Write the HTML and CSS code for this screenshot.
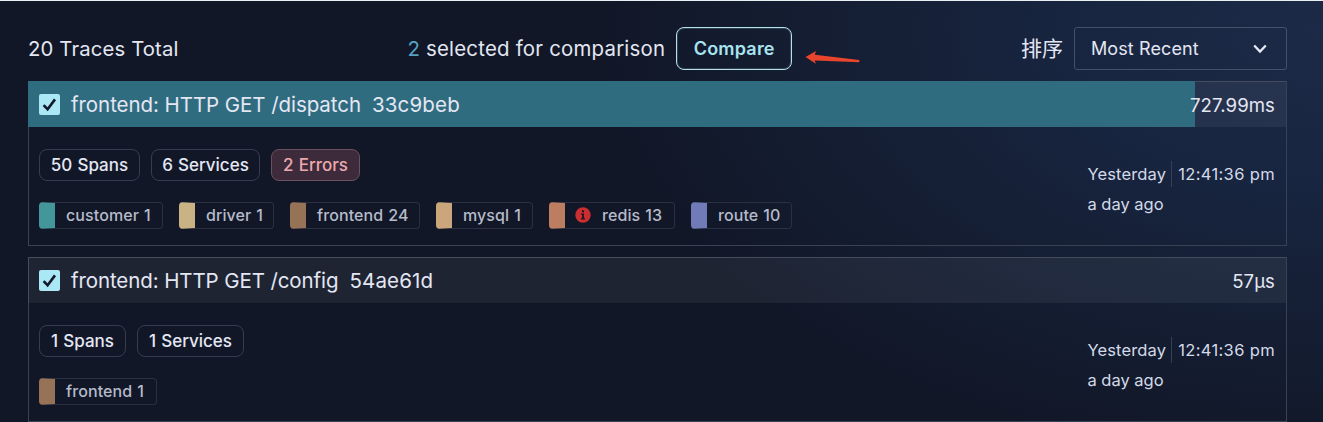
FILE: index.html
```html
<!DOCTYPE html>
<html lang="zh">
<head>
<meta charset="utf-8">
<title>Traces</title>
<link rel="stylesheet" href="styles.css">
</head>
<body>
<main class="page">
  <header class="toolbar">
    <div class="total">20 Traces Total</div>
    <div class="selection">
      <span><span class="count">2</span> selected for comparison</span>
      <button class="compare">Compare</button>
      <svg class="arrow" width="56" height="16" viewBox="0 0 56 16"><path d="M0.5 7 11 1 9.8 4.8 54.5 10 54.2 12.2 9.8 10.4 10.8 13.8Z" fill="#e8452c"/></svg>
    </div>
    <div class="sort">
      <span class="sort-label">排序</span>
      <div class="select"><span>Most Recent</span>
        <svg width="14" height="10" viewBox="0 0 14 10"><path d="M1.2 1.5 7 7.5 12.8 1.5" fill="none" stroke="#e6eaf5" stroke-width="2.3"/></svg>
      </div>
    </div>
  </header>

  <section class="card">
    <div class="card-head">
      <div class="bar" style="width:1167px"></div>
      <span class="check"><svg width="21" height="21" viewBox="0 0 21 21"><path d="M4.6 11.2 8.6 15.2 16 5.4" fill="none" stroke="#14192c" stroke-width="2.6"/></svg></span>
      <span class="name">frontend: HTTP GET /dispatch</span><span class="trace-id">33c9beb</span>
      <span class="duration">727.99ms</span>
    </div>
    <div class="card-body">
      <div class="details">
        <div class="pills">
          <span class="pill w-50">50 Spans</span><span class="pill w-6s">6 Services</span><span class="pill error">2 Errors</span>
        </div>
        <div class="tags">
          <span class="tag teal w-cust">customer 1</span>
          <span class="tag sand w-driv">driver 1</span>
          <span class="tag brown w-f24">frontend 24</span>
          <span class="tag tan w-mysq">mysql 1</span>
          <span class="tag clay w-redi"><svg width="16" height="16" viewBox="0 0 16 16"><circle cx="8" cy="8" r="7.7" fill="#c92f30"/><path d="M7 3.2h2v2H7zM6.2 6.6h2.7v4.3h1v1.6H6.1v-1.6h1V8.1h-.9z" fill="#241322"/></svg>redis 13</span>
          <span class="tag blue w-rout">route 10</span>
        </div>
      </div>
      <div class="when">
        <div class="stamp"><span class="day">Yesterday</span><span class="time">12:41:36 pm</span></div>
        <div class="ago">a day ago</div>
      </div>
    </div>
  </section>

  <section class="card">
    <div class="card-head">
      <span class="check"><svg width="21" height="21" viewBox="0 0 21 21"><path d="M4.6 11.2 8.6 15.2 16 5.4" fill="none" stroke="#14192c" stroke-width="2.6"/></svg></span>
      <span class="name config">frontend: HTTP GET /config</span><span class="trace-id">54ae61d</span>
      <span class="duration">57μs</span>
    </div>
    <div class="card-body">
      <div class="details">
        <div class="pills">
          <span class="pill w-1p">1 Spans</span><span class="pill w-1s">1 Services</span>
        </div>
        <div class="tags">
          <span class="tag brown w-f1">frontend 1</span>
        </div>
      </div>
      <div class="when">
        <div class="stamp"><span class="day">Yesterday</span><span class="time">12:41:36 pm</span></div>
        <div class="ago">a day ago</div>
      </div>
    </div>
  </section>
</main>
</body>
</html>
```
FILE: styles.css
```css
* { box-sizing: border-box; }
body {
  margin: 0;
  font-family: Inter, "Noto Sans CJK SC", sans-serif;
  color: #e4e7f3;
  background: #111526;
}
.page {
  height: 422px;
  overflow: hidden;
  padding: 26px 36px 0 28px;
  border-top: 1px solid #e9f0f4;
  background: radial-gradient(ellipse 720px 430px at 1323px 30px, #1c2a47 0%, #182540 35%, #111727 100%);
  white-space: nowrap;
}
.toolbar {
  display: flex;
  justify-content: space-between;
  align-items: center;
  height: 43px;
  margin-bottom: 11px;
}
.total { font-size: 20.3px; letter-spacing: 0.15px; }
.selection { position: relative; display: flex; align-items: center; gap: 11px; font-size: 20.4px; letter-spacing: 0.22px; }
.count { color: #55a3c4; }
.compare {
  width: 116px;
  height: 43px;
  padding: 0;
  border: 1px solid #b4dfeb;
  box-shadow: inset 0 0 0 1px rgba(169, 219, 232, 0.2);
  border-radius: 8px;
  background: none;
  font: 600 18px Inter, sans-serif;
  letter-spacing: 0.2px;
  color: #a8e4ef;
}
.arrow { position: absolute; left: 398px; top: 23px; }
.sort { display: flex; align-items: center; gap: 11px; }
.sort-label { font-size: 21px; line-height: 30px; }
.select {
  display: flex;
  justify-content: space-between;
  align-items: center;
  width: 213px;
  height: 43px;
  padding: 0 19px 0 16px;
  border: 1px solid #435069;
  border-radius: 3px;
  font-size: 18px;
  letter-spacing: 0.1px;
}
.card {
  height: 165px;
  margin-bottom: 11px;
  border: 1px solid #3a4152;
}
.card-head {
  position: relative;
  display: flex;
  align-items: center;
  height: 46px;
  margin: -1px 0 0 -1px;
  padding: 1px 11px 0 11px;
  background: rgba(255, 255, 255, 0.06);
  font-size: 20.5px;
}
.card-head > span { position: relative; }
.bar { position: absolute; left: 0; top: 0; height: 46px; background: #306c80; }
.check { width: 21px; height: 21px; margin-right: 11px; border-radius: 2px; background: #a9e8f4; }
.check svg { display: block; }
.name { letter-spacing: -0.06px; }
.config { letter-spacing: -0.1px; }
.trace-id { margin-left: 11px; letter-spacing: 0.15px; }
.duration { margin-left: auto; font-size: 18.6px; letter-spacing: 0.08px; }
.card-body { display: flex; justify-content: space-between; padding: 22px 11px 0 10px; }
.pills { display: flex; gap: 11px; }
.pill {
  display: flex;
  align-items: center;
  justify-content: center;
  height: 32px;
  border: 1px solid #373d50;
  border-radius: 8px;
  font-size: 17px;
  font-weight: 500;
  word-spacing: 0.6px;
}
.w-50 { width: 101px; }
.w-6s { width: 109px; }
.w-1p { width: 87px; }
.w-1s { width: 107px; }
.error { width: 89px; border-color: #6b5060; background: #3d2a3a; color: #eba9ad; }
.tags { display: flex; gap: 16px; margin-top: 21px; }
.tag {
  display: flex;
  align-items: center;
  height: 27px;
  padding: 0 0 2px 11px;
  border: 1px solid #2a3042;
  border-left: 16px solid;
  border-radius: 4px;
  font-size: 16px;
  font-weight: 500;
  letter-spacing: 0.1px;
  word-spacing: 0.6px;
  color: #b6bbca;
}
.tag svg { margin-right: 11px; }
.w-cust { width: 124px; }
.w-driv { width: 95px; }
.w-f24 { width: 130px; }
.w-mysq { width: 97px; }
.w-redi { width: 126px; padding-left: 10px; }
.w-rout { width: 101px; }
.w-f1 { width: 118px; }
.teal { border-left-color: #43979b; }
.sand { border-left-color: #c9b384; }
.brown { border-left-color: #967257; }
.tan { border-left-color: #cba67c; }
.clay { border-left-color: #bd7d60; }
.blue { border-left-color: #707bb8; }
.when { padding-top: 12px; font-size: 16.5px; letter-spacing: 0.15px; color: #d4dae8; }
.stamp { display: flex; height: 26px; line-height: 26px; }
.day { padding-right: 5px; border-right: 1px solid #344057; }
.time { padding-left: 6px; letter-spacing: 0.35px; }
.ago { margin-top: 4px; line-height: 26px; letter-spacing: 0; }
```
